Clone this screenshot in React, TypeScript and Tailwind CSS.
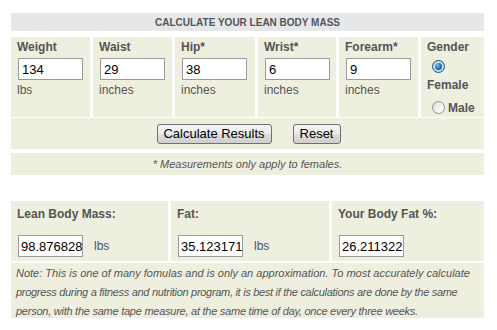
import React from "react";

const cell = "bg-[#efefe0]";

type FieldProps = { label: string; value: string; unit: string };

const Field: React.FC<FieldProps> = ({ label, value, unit }) => (
  <div className={`${cell} pl-[6px]`}>
    <div className="text-[12px] leading-[20px] font-bold">{label}</div>
    <input
      readOnly
      value={value}
      className="mt-px ml-px block h-[22px] w-[65px] border border-[#9a9a9a] bg-white pl-[3px] text-[13px] text-black outline-none"
    />
    <div className="text-[12px] leading-[20px]">{unit}</div>
  </div>
);

const Radio: React.FC<{ checked?: boolean }> = ({ checked }) =>
  checked ? (
    <span className="inline-flex h-[13px] w-[13px] items-center justify-center rounded-full border border-[#1c4f7c] bg-[radial-gradient(circle,#dff1ff_0%,#a9cfe9_100%)]">
      <span className="h-[7px] w-[7px] rounded-full bg-[radial-gradient(circle_at_35%_35%,#7cc4f0_0%,#1d66a8_60%,#0d3f70_100%)]" />
    </span>
  ) : (
    <span className="inline-block h-[13px] w-[13px] rounded-full border border-[#8f8f8f] bg-[linear-gradient(135deg,#d9d9d9_0%,#f6f6f6_60%,#ffffff_100%)]" />
  );

const btn =
  "h-[20px] rounded-[3px] border border-[#707070] bg-[linear-gradient(to_bottom,#f4f4f4_0%,#ebebeb_50%,#dddddd_51%,#cfcfcf_100%)] text-[13px] leading-[18px] text-black";

type ResultProps = { label: string; value: string; unit?: string };

const Result: React.FC<ResultProps> = ({ label, value, unit }) => (
  <div className={`${cell} pl-[6px] pt-[3px]`}>
    <div className="text-[12px] leading-[20px] font-bold">{label}</div>
    <div className="mt-[11px] flex items-center">
      <input
        readOnly
        value={value}
        className="ml-px block h-[22px] w-[65px] border border-[#9a9a9a] bg-white pl-[2px] text-[13px] text-black outline-none"
      />
      {unit && <span className="ml-[11px] text-[12px]">{unit}</span>}
    </div>
  </div>
);

export default function App() {
  return (
    <div className="h-[330px] w-[497px] bg-white font-['Liberation_Sans',Arial,sans-serif] text-[#555555]">
      <div className="ml-[11px] w-[473px] pt-[13px]">
        <div className="flex h-[18px] items-center justify-center bg-[#e6e7e9] text-[10px] font-bold uppercase">
          Calculate your lean body mass
        </div>

        <div className="mt-[6px] grid h-[78px] grid-cols-[79px_79px_80px_78px_79px_1fr] gap-x-[3px]">
          <Field label="Weight" value="134" unit="lbs" />
          <Field label="Waist" value="29" unit="inches" />
          <Field label="Hip*" value="38" unit="inches" />
          <Field label="Wrist*" value="6" unit="inches" />
          <Field label="Forearm*" value="9" unit="inches" />
          <div className={`${cell} pl-[6px] text-[12px] font-bold`}>
            <div className="leading-[20px]">Gender</div>
            <div className="flex h-[19px] items-center pl-[5px]">
              <Radio checked />
            </div>
            <div className="leading-[19px]">Female</div>
            <div className="mt-[3px] flex h-[19px] items-center gap-[3px] pl-[5px]">
              <Radio />
              <span>Male</span>
            </div>
          </div>
        </div>

        <div className={`${cell} mt-[3px] flex h-[31px] items-center justify-center gap-[21px] pl-[2px]`}>
          <button className={`${btn} w-[115px]`}>Calculate Results</button>
          <button className={`${btn} w-[48px]`}>Reset</button>
        </div>

        <div className={`${cell} mt-[4px] flex h-[22px] items-center justify-center text-[11px] italic`}>
          * Measurements only apply to females.
        </div>

        <div className="mt-[26px] grid h-[60px] grid-cols-[157px_158px_1fr] gap-x-[3px]">
          <Result label="Lean Body Mass:" value="98.876828" unit="lbs" />
          <Result label="Fat:" value="35.123171" unit="lbs" />
          <Result label="Your Body Fat %:" value="26.211322" />
        </div>

        <div className={`${cell} mt-[2px] h-[55px] pt-px pl-[5px] text-[11px] leading-[19px] whitespace-nowrap italic`}>
          Note: This is one of many fomulas and is only an approximation. To most accurately calculate
          <br />
          <span className="tracking-[-0.3px]">
            progress during a fitness and nutrition program, it is best if the calculations are done by the same
          </span>
          <br />
          <span className="tracking-[-0.25px]">
            person, with the same tape measure, at the same time of day, once every three weeks.
          </span>
        </div>
      </div>
    </div>
  );
}
